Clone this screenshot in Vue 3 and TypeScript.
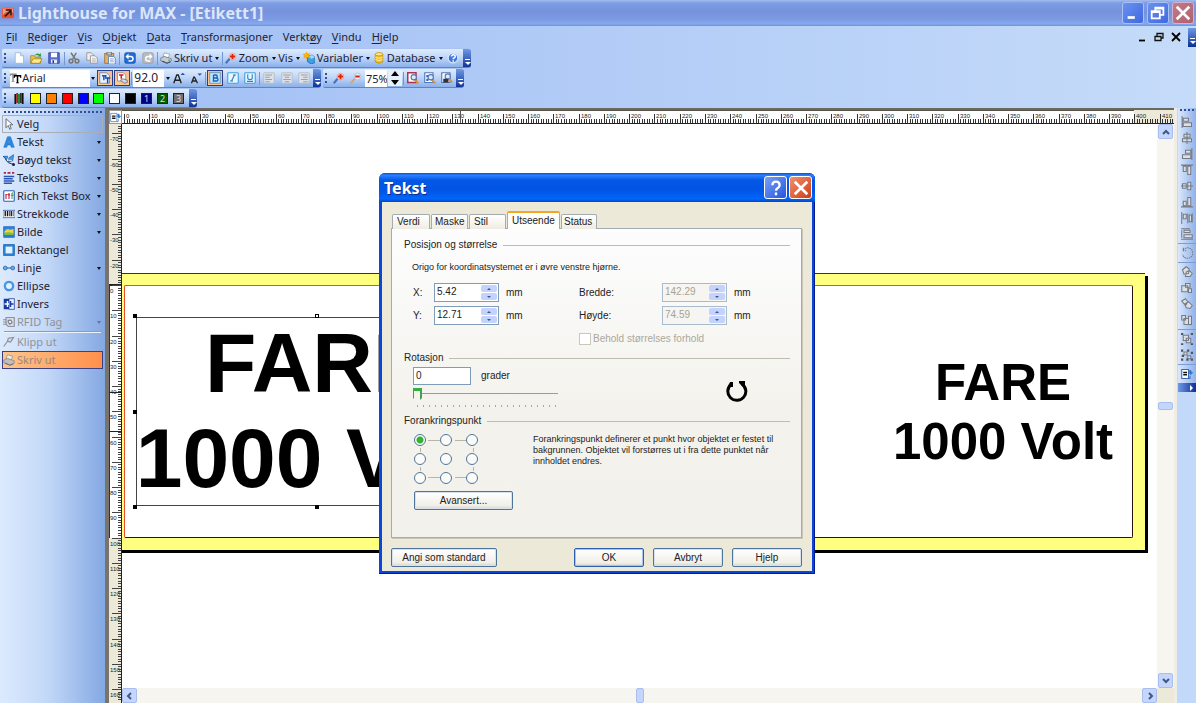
<script setup lang="ts">
import { ref } from 'vue'

const icons: Record<string, string> = {
  logo: '<rect x="0" y="1" width="16" height="14" rx="2" fill="#e2512e"/><path d="M1 2h14v6q-8-5-14 3z" fill="#f39a80"/><path d="M3 12l7-7H5V3h8v8h-2V7l-6 6z" fill="#2b1512"/>',
  page: '<path d="M3 1h7l4 4v10H3z" fill="#fff" stroke="#8fb2dc"/><path d="M10 1v4h4" fill="#cfe2f8" stroke="#8fb2dc"/>',
  open: '<path d="M1 5h5l1 2h7v8H1z" fill="#f5c842" stroke="#9a7a20"/><path d="M1 15l3-6h12l-3 6z" fill="#ffe88a" stroke="#9a7a20"/><path d="M6 5q3-5 7-2l1-2 1 5-5 0 2-1q-3-2-6 0z" fill="#2f9a3c"/>',
  save: '<path d="M1 1h14v14H1z" fill="#5a6fd0" stroke="#28358a"/><rect x="4" y="1" width="8" height="6" fill="#fff"/><rect x="4" y="10" width="8" height="5" fill="#dfe5fa"/><rect x="6" y="11" width="2" height="4" fill="#28358a"/>',
  cut: '<path d="M4 1l6 9M11 1L6 10" stroke="#777" stroke-width="2" fill="none"/><circle cx="4" cy="12" r="2.5" fill="none" stroke="#777" stroke-width="2"/><circle cx="12" cy="12" r="2.5" fill="none" stroke="#777" stroke-width="2"/>',
  copy: '<path d="M1 1h6l3 3v7H1z" fill="#eee" stroke="#888"/><path d="M6 5h6l3 3v7H6z" fill="#f7f7f7" stroke="#888"/><path d="M8 9h5M8 11h5M8 13h5" stroke="#aaa"/>',
  paste: '<rect x="1" y="2" width="12" height="13" fill="#e3b35c" stroke="#94682a"/><rect x="4" y="0" width="6" height="4" fill="#c9c9c9" stroke="#666"/><path d="M6 6h7l2 2v8H6z" fill="#fff" stroke="#4a6fb5"/><path d="M8 9h5M8 11h5M8 13h5" stroke="#7a9bd0"/>',
  undo: '<rect x="1" y="1" width="14" height="14" rx="2" fill="#1f6fd8" stroke="#1048a0"/><path d="M4 6h5q3 0 3 3t-3 3H6" fill="none" stroke="#fff" stroke-width="2"/><path d="M2 6l4-4v8z" fill="#fff"/>',
  redo: '<rect x="1" y="1" width="14" height="14" rx="2" fill="#b9bcc2" stroke="#999"/><path d="M12 6H8q-3 0-3 3t3 3h3" fill="none" stroke="#fff" stroke-width="2"/><path d="M14 6l-4-4v8z" fill="#fff"/>',
  print: '<path d="M4 6l2-5 7 2-2 5z" fill="#fff" stroke="#8a94a8"/><path d="M1 8l5-2 9 3v3l-5 3-9-3z" fill="#c6ccd8" stroke="#6b7488"/><path d="M3 12l6 3 5-2" stroke="#444c60" stroke-width="1.5" fill="none"/><circle cx="12" cy="11" r="1" fill="#35a040"/>',
  printoff: '<path d="M4 6l2-5 7 2-2 5z" fill="#eeeae4" stroke="#8f8f92"/><path d="M1 8l5-2 9 3v3l-5 3-9-3z" fill="#c2bfbb" stroke="#85868a"/><path d="M3 12l6 3 5-2" stroke="#74767c" stroke-width="1.5" fill="none"/>',
  zoom: '<path d="M1 15l6-7" stroke="#4a72c4" stroke-width="3"/><circle cx="10" cy="6" r="4.5" fill="#fbe1d4" stroke="#e8a080"/><path d="M10 2.500v7M6.500 6h7" stroke="#e02010" stroke-width="2.500"/>',
  variable: '<path d="M6 6l6-2 4 3v7l-5 2-5-3z" fill="#3f9fe0" stroke="#1d66a8"/><path d="M6 6l6-2 4 3-5 2z" fill="#a5dbf8"/><path d="M5 0l1 3 3-1-2 3 3 2-4 0-1 3-1-3-3 1 1-3-2-2 3 0z" fill="#ffb400" stroke="#d88a00" stroke-width=".5"/>',
  database: '<path d="M3 3v10q5 4 10 0V3z" fill="#f5c220" stroke="#c08a00"/><ellipse cx="8" cy="3" rx="5" ry="2.200" fill="#ffe88a" stroke="#c08a00"/><path d="M3 7q5 3 10 0M3 10q5 3 10 0" fill="none" stroke="#fff2b0"/>',
  help: '<circle cx="8" cy="8" r="6.500" fill="#3d78dc" stroke="#dbe8fb" stroke-width="1.500"/><path d="M6 6q0-2.500 2.500-2.500T11 6q0 1.500-2.500 2.500v1M8.300 11v2" fill="none" stroke="#fff" stroke-width="2"/>',
  tt: '<path d="M0 2h9v3H8L7 4H5v8h1v1H2v-1h1V4H2L1 5H0z" fill="#888"/><path d="M5 4h10v4h-1l-1-2h-2v8h1v1H8v-1h1V6H7L6 8H5z" fill="#000"/>',
  doctext: '<path d="M1 1h9l4 4v10H1z" fill="#e9f3ff" stroke="#4a7cc0"/><path d="M4 5h5v2M6.500 5v6" stroke="#2255aa" stroke-width="2" fill="none"/><path d="M8 8h7M11.500 8v7" stroke="#1848a8" stroke-width="2"/>',
  docprint: '<path d="M2 1h8l3 3v8H2z" fill="#fff" stroke="#6a7fa8"/><path d="M4 4h6M7 4v5" stroke="#d02020" stroke-width="2"/><path d="M6 11l3-2 6 2v3l-4 1z" fill="#d5d9e2" stroke="#555f78"/>',
  grow: '<path d="M1 15L5 4h2l4 11M3 11h6" stroke="#222" stroke-width="1.800" fill="none"/><path d="M10 4l3-3 3 3z" fill="#1c4fb0"/>',
  shrink: '<path d="M2 15L5 7h1l4 8M4 12h5" stroke="#222" stroke-width="1.700" fill="none"/><path d="M10 2l3 3 3-3z" fill="#1c4fb0"/>',
  bold: '<rect x="1" y="1" width="14" height="14" fill="#bfe4fb" stroke="#3f8fd0"/><path d="M6 4v8M6 4h3q2 0 2 2t-2 2H6h4q2 0 2 2t-2 2H5" fill="none" stroke="#1c62b4" stroke-width="1.800"/>',
  italic: '<rect x="1" y="1" width="14" height="14" rx="1" fill="#eaf6ff" stroke="#3fa0e0" stroke-width="1.500"/><path d="M10 4L6 12M8 4h4M4 12h4" fill="none" stroke="#2f7fc8" stroke-width="1.500"/>',
  under: '<rect x="1" y="1" width="14" height="14" rx="1" fill="#eaf6ff" stroke="#3fa0e0" stroke-width="1.500"/><path d="M5 3v5q0 2 3 2t3-2V3M4 12.500h8" fill="none" stroke="#2f7fc8" stroke-width="1.500"/>',
  alignl: '<rect x="1" y="1" width="14" height="14" rx="1" fill="#dde1e8" stroke="#b2b6be"/><path d="M3 4h9M3 7h6M3 10h9M3 13h6" stroke="#858992"/>',
  alignc: '<rect x="1" y="1" width="14" height="14" rx="1" fill="#dde1e8" stroke="#b2b6be"/><path d="M3 4h10M5 7h6M3 10h10M5 13h6" stroke="#858992"/>',
  alignr: '<rect x="1" y="1" width="14" height="14" rx="1" fill="#dde1e8" stroke="#b2b6be"/><path d="M4 4h9M7 7h6M4 10h9M7 13h6" stroke="#858992"/>',
  zoomout: '<path d="M1 15l6-7" stroke="#e0a060" stroke-width="2.500"/><circle cx="10" cy="6" r="4.500" fill="#e4f0fc" stroke="#a8b8d0"/><path d="M7 6h6" stroke="#e02010" stroke-width="2.500"/>',
  fitpage: '<path d="M1 1h11v13H1z" fill="#fff" stroke="#b03050" stroke-width="2"/><path d="M10 10l5 5" stroke="#e09030" stroke-width="2.500"/><circle cx="9" cy="7" r="3.500" fill="#dcecfb" stroke="#5578b8" stroke-width="1.500"/>',
  fitobj: '<path d="M1 1h11v13H1z" fill="#fff" stroke="#5578b8" stroke-width="1.500"/><path d="M3 4h3v3H3zM3 9h3v3H3z" fill="#3468c8"/><path d="M10 10l5 5" stroke="#e09030" stroke-width="2.500"/><circle cx="9" cy="7" r="3.500" fill="#dcecfb" stroke="#5578b8" stroke-width="1.500"/>',
  fitsel: '<path d="M1 1h11v13H1z" fill="#fff" stroke="#5578b8" stroke-width="1.500"/><circle cx="9" cy="6" r="3.500" fill="#dcecfb" stroke="#5578b8" stroke-width="1.500"/><path d="M11 9l4 5" stroke="#e09030" stroke-width="2.500"/><path d="M3 9h7v5H3z" fill="#333"/>',
  arrow: '<path d="M4 1v12l3-3 2 5 2-1-2-5h4z" fill="#fff" stroke="#444"/>',
  text: '<path d="M1 15L6 1h4l5 14h-4l-1-3H6l-1 3zM7 9h2L8 5z" fill="#2a8be4" stroke="#1765b8" stroke-width=".7" fill-rule="evenodd"/>',
  bent: '<path d="M0 3q3 1 4 5t10 6" fill="none" stroke="#123" stroke-width="1.200"/><path d="M2 3h4v2L4 8zM8 5l6-4-1 8-6 2z" fill="#4aa0e8" stroke="#1c5ca8"/><circle cx="14" cy="14" r="2" fill="#223"/><path d="M6 8l6 1" stroke="#fff"/>',
  textbox: '<path d="M1 1h3M6 1h4M12 1h3" stroke="#b02840" stroke-width="2.500"/><path d="M1 6h14M1 9h12M1 12h14M1 15h11" stroke="#2c55b8" stroke-width="1.800"/>',
  rtf: '<rect x="1" y="1" width="14" height="14" rx="1" fill="#fff" stroke="#2c62b8" stroke-width="1.500"/><path d="M4 12V6h2M8 4v8M6.500 6.500h3" fill="none" stroke="#c02838" stroke-width="1.500"/><path d="M12 12V4h1.500M11 7h3" fill="none" stroke="#208848" stroke-width="1.200"/>',
  barcode: '<rect x="0" y="3" width="16" height="10" fill="#fff" stroke="#2c4f98"/><path d="M3 4v7M6 4v7M11 4v7" stroke="#111" stroke-width="1.800"/><path d="M8.500 4v7M13.500 4v7" stroke="#111"/>',
  image: '<rect x="1" y="1" width="14" height="14" fill="#2a86e0" stroke="#1c5cb0"/><path d="M2 7q3-3 5-3 1 2 7 0v6H2z" fill="#f4d040"/><path d="M2 9q6-2 12 1v2H2z" fill="#78c048"/><path d="M2 12h12v2H2z" fill="#2a78d0"/>',
  rect: '<rect x="2" y="2" width="12" height="12" fill="#e4f2ff" stroke="#2f86d8" stroke-width="3"/><rect x="1" y="1" width="14" height="14" fill="none" stroke="#1560b0"/>',
  line: '<path d="M3 8h10" stroke="#2c70c0" stroke-width="1.500"/><circle cx="3" cy="8" r="2.500" fill="#6ab0f0" stroke="#1c58a8"/><circle cx="13" cy="8" r="2.500" fill="#6ab0f0" stroke="#1c58a8"/>',
  ellipse: '<circle cx="8" cy="8" r="5.500" fill="#e4f2ff" stroke="#2a80d4" stroke-width="3"/><circle cx="8" cy="8" r="5.500" fill="none" stroke="#79bcf2"/>',
  invers: '<rect x="1" y="1" width="7" height="14" fill="#143a9c"/><rect x="8" y="1" width="7" height="14" fill="#e8f0ff" stroke="#143a9c"/><path d="M2 7h3V4h2v3h1v2H7v3H5V9H2z" fill="#fff"/><path d="M14 7h-3V4H9v8h2V9h3z" fill="#143a9c"/>',
  rfid: '<path d="M4 2h11v12H7L4 11z" fill="#d8dce4" stroke="#8d929c" stroke-width="1.500"/><path d="M0 5h5M0 8h5M0 11h5" stroke="#8d929c" stroke-width="1.500"/><path d="M7 6q4-2 5 3l-3 2-2-3z" fill="#f2f4f8" stroke="#777d88" stroke-width="1.500"/>',
  clip: '<path d="M1 14l5-7M6 7l1-4 7-1-4 6z" fill="#d5d9e0" stroke="#8a8f98" stroke-width="1.500"/>',
  aL: '<path d="M1.500 0v16M3 3h7v4H3zM3 9h11v5H3z"/>', aC: '<path d="M8 0v16M4 3h8v4H4zM2 9h12v4H2z"/>', aR: '<path d="M14.500 0v16M6 3h7v4H6zM2 9h11v5H2z"/>',
  aT: '<path d="M0 1.500h16M3 3h4v7H3zM9 3h4v11H9z"/>', aM: '<path d="M0 8h16M2 5h5v6H2zM9 3h4v10H9z"/>', aB: '<path d="M0 14.500h16M3 7h4v6H3zM9 2h4v11H9z"/>',
  dH: '<path d="M1 0v16M15 2v12M3 3h4v6H3zM9 2v13M11 4h3v9h-3z"/>', dV: '<path d="M0 1h12M0 15h16M4 3h8v3H4zM4 9h11v4H4zM1 3v10"/>',
  rot: '<path d="M3 4a7 7 0 1 1-1 6M3 1v4h4" fill="none" stroke-dasharray="2 1"/>',
  o1: '<path d="M2 5l5-4 4 3-1 6-6 1zM7 8l4-2 4 4-3 4-6 0z"/>', o2: '<path d="M1 5h8v8H1zM6 2h6v5H6zM10 9h4v5h-4z"/>', o3: '<path d="M1 4l5-3 3 4-3 5zM5 8l5-3 5 5-3 4-5-1z"/>', o4: '<path d="M1 2h5v6H1zM4 6h6v8H4zM10 3h4v11h-4z"/>',
  grp: '<path d="M3 3h7v7H3zM7 7h6v6H7z"/><path d="M0 1h3M13 1h3M0 15h3M13 15h3" stroke="#555" stroke-width="3"/>', ungrp: '<path d="M4 4h4v4H4zM9 9h4v4H9z"/><path d="M0 2h3M8 2h3M13 5h3M1 9h3M0 14h3M7 14h3M13 14h3" stroke="#555" stroke-width="3"/>',
  props: '<path d="M1 2h9v12H1z" fill="#fff" stroke="#3d68b0"/><path d="M3 6h5M3 9h5" stroke="#111" stroke-width="2"/><path d="M10 4q4-3 4 2l2 0-3 3-3-3h2" fill="#2c70d0" stroke="#2c70d0" stroke-width=".5"/><path d="M12 10v4h-2" fill="none" stroke="#2c70d0"/>',
}

const menus = [['F', 'il', ''], ['R', 'ediger', ''], ['V', 'is', ''], ['O', 'bjekt', ''], ['D', 'ata', ''], ['T', 'ransformasjoner', ''], ['ø', 'y', 'Verkt'], ['V', 'indu', ''], ['H', 'jelp', '']]
const swatches = ['#ffff00', '#ff8000', '#ff0000', '#0000ff', '#00ff00', '#ffffff', '#000000']
const numbered = [{ n: 1, c: '#000080' }, { n: 2, c: '#006000' }, { n: 3, c: '#707070' }]
const tools = [
  { i: 'arrow', t: 'Velg', m: false, off: false },
  { i: 'text', t: 'Tekst', m: true, off: false },
  { i: 'bent', t: 'Bøyd tekst', m: true, off: false },
  { i: 'textbox', t: 'Tekstboks', m: true, off: false },
  { i: 'rtf', t: 'Rich Tekst Box', m: true, off: false },
  { i: 'barcode', t: 'Strekkode', m: true, off: false },
  { i: 'image', t: 'Bilde', m: true, off: false },
  { i: 'rect', t: 'Rektangel', m: false, off: false },
  { i: 'line', t: 'Linje', m: true, off: false },
  { i: 'ellipse', t: 'Ellipse', m: false, off: false },
  { i: 'invers', t: 'Invers', m: false, off: false },
  { i: 'rfid', t: 'RFID Tag', m: true, off: true },
]
const sideGroups = [['aL', 'aC', 'aR', 'aT', 'aM', 'aB', 'dH', 'dV'], ['rot'], ['o1', 'o2', 'o3', 'o4'], ['grp', 'ungrp'], ['props']]

const step = 2.526
const hTicks = Array.from({ length: 416 }, (_, n) => ({ x: Math.round(2 + n * step), major: n % 10 === 0, n }))
const vTicks = Array.from({ length: 228 }, (_, k) => k - 63).map((n) => ({ y: Math.round(161 + n * step), major: n % 10 === 0, n: n < 0 ? n - 10 : n }))

const posX = ref('5.42')
const posY = ref('12.71')
const width = ref('142.29')
const height = ref('74.59')
const angle = ref('0')
const slide = ref(0)
const anchor = ref(0)
const keep = ref(false)
const font = ref('Arial')
const size = ref('92.0')
const zoomLevel = ref('75%')
const tabs = ['Verdi', 'Maske', 'Stil', 'Utseende', 'Status']
const tab = ref('Utseende')
</script>

<template>
  <div class="app">
    <header class="titlebar">
      <svg class="ic" viewBox="0 0 16 16" v-html="icons.logo" />
      <h1>Lighthouse for MAX - [Etikett1]</h1>
      <div class="winbtns">
        <button aria-label="Minimer"><svg viewBox="0 0 20 20"><path d="M4 15h8" stroke="#fff" stroke-width="3" /></svg></button>
        <button aria-label="Gjenopprett"><svg viewBox="0 0 20 20"><path d="M7 8V4h9v8h-4M7 5h9M3 8h9v8H3zM3 9h9" fill="none" stroke="#fff" stroke-width="2" /></svg></button>
        <button class="close" aria-label="Lukk"><svg viewBox="0 0 20 20"><path d="M3 3l14 14M17 3L3 17" stroke="#fff" stroke-width="3" /></svg></button>
      </div>
    </header>

    <div class="chrome">
      <nav class="menubar">
        <button v-for="m in menus" :key="m[1]">{{ m[2] }}<u>{{ m[0] }}</u>{{ m[1] }}</button>
        <div class="mdi">
          <button aria-label="Minimer dokument"><svg viewBox="0 0 10 10"><path d="M2 8.500h6" stroke="#000" stroke-width="1.800" /></svg></button>
          <button aria-label="Gjenopprett dokument"><svg viewBox="0 0 10 10"><path d="M3 4V1.500h6V6H7M1 4.500h6v4H1z" fill="none" stroke="#111" stroke-width="1.300" /></svg></button>
          <button aria-label="Lukk dokument"><svg viewBox="0 0 10 10"><path d="M1 1l8 8M9 1L1 9" stroke="#000" stroke-width="1.800" /></svg></button>
          <span class="knob" />
        </div>
      </nav>

      <div class="barrow">
        <div class="bar bar-main">
          <span class="grip" />
          <button class="ib" v-for="i in ['page', 'open', 'save']" :key="i" :aria-label="i"><svg class="ic" viewBox="0 0 16 16" v-html="icons[i]" /></button>
          <span class="sep" />
          <button class="ib" v-for="i in ['cut', 'copy', 'paste']" :key="i" :aria-label="i"><svg class="ic" viewBox="0 0 16 16" v-html="icons[i]" /></button>
          <span class="sep" />
          <button class="ib" v-for="i in ['undo', 'redo']" :key="i" :aria-label="i"><svg class="ic" viewBox="0 0 16 16" v-html="icons[i]" /></button>
          <span class="sep" />
          <button class="lb"><svg class="ic" viewBox="0 0 16 16" v-html="icons.print" />Skriv ut<i class="dd" /></button>
          <span class="sep" />
          <button class="lb"><svg class="ic" viewBox="0 0 16 16" v-html="icons.zoom" />Zoom<i class="dd" /></button>
          <button class="lb">Vis<i class="dd" /></button>
          <button class="lb"><svg class="ic" viewBox="0 0 16 16" v-html="icons.variable" />Variabler<i class="dd" /></button>
          <button class="lb"><svg class="ic" viewBox="0 0 16 16" v-html="icons.database" />Database<i class="dd" /></button>
          <button class="ib" aria-label="Hjelp"><svg class="ic" viewBox="0 0 16 16" v-html="icons.help" /></button>
          <span class="knob" />
        </div>
      </div>

      <div class="barrow">
        <div class="bar bar-format">
          <span class="grip" />
          <span class="combo wide">
            <svg class="ic" viewBox="0 0 16 16" v-html="icons.tt" />
            <select v-model="font" aria-label="Skrift"><option>Arial</option></select>
          </span>
          <i class="dd" />
          <button class="ib on" aria-label="Skrivertekst"><svg class="ic" viewBox="0 0 16 16" v-html="icons.doctext" /></button>
          <button class="ib on" aria-label="Skriverfont"><svg class="ic" viewBox="0 0 16 16" v-html="icons.docprint" /></button>
          <span class="sep" />
          <span class="combo"><select v-model="size" aria-label="Størrelse"><option>92.0</option></select></span>
          <i class="dd" />
          <button class="ib" aria-label="Større"><svg class="ic" viewBox="0 0 16 16" v-html="icons.grow" /></button>
          <button class="ib" aria-label="Mindre"><svg class="ic" viewBox="0 0 16 16" v-html="icons.shrink" /></button>
          <span class="sep" />
          <button class="ib on" aria-label="Fet"><svg class="ic" viewBox="0 0 16 16" v-html="icons.bold" /></button>
          <button class="ib" v-for="i in ['italic', 'under']" :key="i" :aria-label="i"><svg class="ic" viewBox="0 0 16 16" v-html="icons[i]" /></button>
          <span class="sep" />
          <button class="ib" v-for="i in ['alignl', 'alignc', 'alignr']" :key="i" :aria-label="i"><svg class="ic" viewBox="0 0 16 16" v-html="icons[i]" /></button>
          <span class="knob" />
        </div>
        <div class="bar bar-zoom">
          <span class="grip" />
          <button class="ib" aria-label="Zoom inn"><svg class="ic" viewBox="0 0 16 16" v-html="icons.zoom" /></button>
          <button class="ib" aria-label="Zoom ut"><svg class="ic" viewBox="0 0 16 16" v-html="icons.zoomout" /></button>
          <input v-model="zoomLevel" class="zoomin" aria-label="Zoomnivå" />
          <span class="updown">
            <button aria-label="Opp"><svg viewBox="0 0 8 5"><path d="M0 5l4-5 4 5z" /></svg></button>
            <button aria-label="Ned"><svg viewBox="0 0 8 5"><path d="M0 0l4 5 4-5z" /></svg></button>
          </span>
          <span class="sep" />
          <button class="ib" v-for="i in ['fitpage', 'fitobj', 'fitsel']" :key="i" :aria-label="i"><svg class="ic" viewBox="0 0 16 16" v-html="icons[i]" /></button>
          <span class="knob" />
        </div>
      </div>

      <div class="barrow">
        <div class="bar bar-color">
          <span class="grip" />
          <button class="sw multi" aria-label="Alle farger"><svg viewBox="0 0 10 12"><path d="M1 1v11M9 0v12" stroke="#111" stroke-width="2" /><path d="M3 0v11" stroke="#c01818" stroke-width="2" /><path d="M5 1v11" stroke="#188a18" stroke-width="2" /><path d="M7 0v11" stroke="#333" stroke-width="2" /></svg></button>
          <button v-for="c in swatches" :key="c" class="sw" :style="{ background: c }" :aria-label="c" />
          <button v-for="s in numbered" :key="s.n" class="sw num" :style="{ background: s.c }">{{ s.n }}</button>
          <span class="knob" />
        </div>
      </div>
    </div>

    <main class="work">
      <aside class="palette">
        <div class="dots" />
        <button v-for="(t, k) in tools" :key="t.t" :class="['tool', { first: k === 0 }]" :disabled="t.off">
          <svg class="ic" viewBox="0 0 16 16" v-html="icons[t.i]" /><span>{{ t.t }}</span><i v-if="t.m" class="dd" />
        </button>
        <hr />
        <button class="tool" disabled><svg class="ic" viewBox="0 0 16 16" v-html="icons.clip" /><span>Klipp ut</span></button>
        <button class="tool picked" disabled><svg class="ic" viewBox="0 0 16 16" v-html="icons.printoff" /><span>Skriv ut</span></button>
      </aside>

      <section class="doc">
        <button class="corner" aria-label="Etikettoppsett"><svg class="ic" viewBox="0 0 16 16" v-html="icons.props" /></button>
        <svg class="ruler-h" shape-rendering="crispEdges">
          <rect x="0" y="0" width="1012" height="13" fill="#fff" />
          <rect x="0" y="0" width="1012" height="1" fill="#55534a" />
          <template v-for="t in hTicks" :key="t.n">
            <rect :x="t.x" :y="t.major ? 4 : 9" width="1" :height="t.major ? 9 : 4" fill="#333" />
            <text v-if="t.major" :x="t.x + 2" y="8">{{ t.n }}</text>
          </template>
          <rect x="338" y="1" width="1" height="12" fill="#555" />
          <rect x="0" y="13" width="100%" height="1" fill="#222" />
        </svg>
        <svg class="ruler-v" shape-rendering="crispEdges">
          <rect x="0" y="161" width="12" height="253" fill="#fff" />
          <rect x="0" y="160" width="12" height="2" fill="#222" />
          <rect x="0" y="161" width="1" height="253" fill="#333" />
          <template v-for="t in vTicks" :key="t.n">
            <rect :x="t.major ? 3 : 9" :y="t.y" :width="t.major ? 9 : 3" height="1" fill="#444" />
            <text v-if="t.major" x="1" :y="t.y + 8">{{ t.n }}</text>
          </template>
          <rect x="0" y="268" width="12" height="1" fill="#222" />
          <rect x="0" y="307" width="12" height="1" fill="#222" />
          <rect x="12" y="0" width="1" height="100%" fill="#222" />
        </svg>
        <div class="canvas">
          <div class="label-sheet"><div class="label-face" /></div>
          <div class="obj big">FARE<br />1000 Volt</div>
          <div class="obj small">FARE<br />1000 Volt</div>
          <div class="selection">
            <b class="h tl" /><b class="h tc" /><b class="h ml" /><b class="h bl" /><b class="h bc" />
          </div>
        </div>
        <div class="vscroll">
          <button aria-label="Rull opp"><svg viewBox="0 0 8 8"><path d="M1 6l3-3 3 3" /></svg></button>
          <span class="thumb" />
          <button aria-label="Rull ned"><svg viewBox="0 0 8 8"><path d="M1 2l3 3 3-3" /></svg></button>
        </div>
        <div class="hscroll">
          <button aria-label="Rull til venstre"><svg viewBox="0 0 8 8"><path d="M5 1L2 4l3 3" /></svg></button>
          <span class="thumb" />
          <button aria-label="Rull til høyre"><svg viewBox="0 0 8 8"><path d="M3 1l3 3-3 3" /></svg></button>
        </div>
      </section>

      <aside class="side">
        <div class="sidebar">
          <div class="dots" />
          <div v-for="(g, k) in sideGroups" :key="k" class="sgroup">
            <button v-for="i in g" :key="i" :aria-label="i"><svg viewBox="0 0 16 16" v-html="icons[i]" /></button>
          </div>
          <span class="sideknob" />
        </div>
      </aside>
    </main>

    <section class="dialog" role="dialog" aria-labelledby="dlg-title">
      <div class="dlg-head">
        <h2 id="dlg-title">Tekst</h2>
        <button aria-label="Hjelp"><svg viewBox="0 0 20 20"><path d="M6 7q0-4 4-4t4 4q0 2-2 3t-2 3M10 15v3" fill="none" stroke="#fff" stroke-width="2.600" /></svg></button>
        <button class="close" aria-label="Lukk"><svg viewBox="0 0 20 20"><path d="M3 3l14 14M17 3L3 17" stroke="#fff" stroke-width="3" /></svg></button>
      </div>
      <div class="dlg-body">
        <div class="tabs" role="tablist">
          <button v-for="t in tabs" :key="t" role="tab" :aria-selected="t === tab" :class="['tab', 'tab-' + t.toLowerCase(), { active: t === tab }]" @click="tab = t">{{ t }}</button>
        </div>
        <div class="panel" role="tabpanel">
          <h3>Posisjon og størrelse</h3>
          <p class="origin">Origo for koordinatsystemet er i øvre venstre hjørne.</p>
          <div class="fields">
            <label for="px">X:</label>
            <span class="spin"><input id="px" v-model="posX" /><span class="arrows"><button aria-label="X opp"><i class="up" /></button><button aria-label="X ned"><i class="dn" /></button></span></span>
            <span>mm</span>
            <label for="pw">Bredde:</label>
            <span class="spin off"><input id="pw" v-model="width" disabled /><span class="arrows"><button aria-label="Bredde opp"><i class="up" /></button><button aria-label="Bredde ned"><i class="dn" /></button></span></span>
            <span>mm</span>
            <label for="py">Y:</label>
            <span class="spin"><input id="py" v-model="posY" /><span class="arrows"><button aria-label="Y opp"><i class="up" /></button><button aria-label="Y ned"><i class="dn" /></button></span></span>
            <span>mm</span>
            <label for="ph">Høyde:</label>
            <span class="spin off"><input id="ph" v-model="height" disabled /><span class="arrows"><button aria-label="Høyde opp"><i class="up" /></button><button aria-label="Høyde ned"><i class="dn" /></button></span></span>
            <span>mm</span>
          </div>
          <label class="keep"><input v-model="keep" type="checkbox" disabled />Behold størrelses forhold</label>
          <h3>Rotasjon</h3>
          <div class="rotation">
            <div>
              <div class="deg"><input id="deg" v-model="angle" /><label for="deg">grader</label></div>
              <input v-model="slide" class="slider" type="range" min="0" max="360" aria-label="Rotasjon" />
              <div class="marks" />
            </div>
            <svg class="turn" viewBox="0 0 22 22"><path d="M5 4.500a9 9 0 1 0 11 -.5" fill="none" stroke="#000" stroke-width="3" /><path d="M13 1h6v6h-2l-4-4z" /><path d="M4 2l3 0v5H2z" /></svg>
          </div>
          <h3>Forankringspunkt</h3>
          <div class="anchor">
            <div class="radios" role="radiogroup" aria-label="Forankringspunkt">
              <svg class="links" viewBox="0 0 60 50"><path d="M14 6.500h13M41 6.500h12M14 43.500h13M41 43.500h12M6.500 14v4M6.500 33v4M59.500 14v4M59.500 33v4" stroke="#b8b5a5" fill="none" /></svg>
              <input v-for="n in 9" :key="n" v-model="anchor" type="radio" name="anchor" :value="n - 1" :aria-label="'Punkt ' + n" />
            </div>
            <p>Forankringspunkt definerer et punkt hvor objektet er festet til bakgrunnen. Objektet vil forstørres ut i fra dette punktet når innholdet endres.</p>
          </div>
          <button class="xp adv">Avansert...</button>
        </div>
        <div class="actions">
          <button class="xp std">Angi som standard</button>
          <button class="xp def">OK</button>
          <button class="xp">Avbryt</button>
          <button class="xp">Hjelp</button>
        </div>
      </div>
    </section>
  </div>
</template>

<style>
html, body { height: 100%; overflow: hidden; }
</style>

<style scoped>
.app {
  position: relative;
  display: flex;
  flex-direction: column;
  height: 100vh;
  overflow: hidden;
  font: 11px/14px "Noto Sans", "DejaVu Sans", sans-serif;
  color: #1c2233;
  background: linear-gradient(90deg, #9fbdf5, #c5dbf9);
}
.app *, .app *::before, .app *::after { box-sizing: border-box; }
button, input, select { font: inherit; color: inherit; margin: 0; padding: 0; border: 0; background: none; border-radius: 0; outline: 0; }
h1, h2, h3, p { margin: 0; }
.ic { width: 12px; height: 12px; flex: none; display: block; }

.titlebar {
  display: flex;
  align-items: center;
  height: 26px;
  padding: 0 2px;
  gap: 4px;
  background: linear-gradient(#a4bdf0 0, #7d9ce4 12%, #7792dc 45%, #7c9be4 75%, #86a9ee 92%, #6f8fd8 100%);
}
.titlebar h1 { flex: 1; font-size: 16px; line-height: 24px; font-weight: 700; color: #dbe6fb; }
.winbtns { display: flex; gap: 3px; }
.winbtns button, .dlg-head button {
  width: 22px;
  height: 22px;
  padding: 1px;
  border: 1px solid #a9c0f4;
  border-radius: 3px;
  background: linear-gradient(135deg, #6a92f0, #3f68e0);
}
.winbtns .close { background: linear-gradient(135deg, #c47a88, #b06070); border-color: #cdb4d0; }
.winbtns svg, .dlg-head svg { display: block; width: 18px; height: 18px; }

.chrome { height: 82px; }
.menubar { display: flex; align-items: center; height: 22px; padding-left: 6px; gap: 10px; }
.menubar button { line-height: 16px; }
.menubar u { text-underline-offset: 2px; }
.mdi { display: flex; align-items: center; margin-left: auto; gap: 7px; height: 20px; }
.mdi button { width: 10px; height: 10px; }
.mdi svg { display: block; width: 10px; height: 10px; }

.barrow { display: flex; gap: 2px; height: 20px; padding: 0 2px; }
.bar {
  display: flex;
  align-items: center;
  height: 20px;
  border-radius: 2px 3px 3px 2px;
  border-bottom: 1px solid #5f84c6;
  border-top: 1px solid #a9c4f4;
  background: linear-gradient(#dfebfd, #bdd4f8 50%, #8cb0ea);
  overflow: hidden;
}
.grip { width: 7px; height: 12px; flex: none; background: radial-gradient(circle at 3px 2px, #34508f 1px, transparent 1px) 0 0 / 7px 4px; }
.sep { width: 1px; height: 13px; flex: none; background: #7596cf; }
.ib { display: flex; align-items: center; justify-content: center; width: 16px; height: 16px; flex: none; }
.ib.on { border: 1px solid #2b3f86; background: linear-gradient(#ffb98a, #fdca92); }
.lb { display: flex; align-items: center; gap: 2px; height: 16px; flex: none; white-space: nowrap; }
.dd { display: block; flex: none; width: 0; height: 0; border: 2px solid transparent; border-top: 3px solid #111; border-bottom: 0; }
.lb .dd { margin: 0 1px; }
.knob {
  width: 8px;
  height: 19px;
  flex: none;
  background: linear-gradient(#6f99e4, #0c2f94);
  position: relative;
}
.knob::after { content: ""; position: absolute; left: 2px; bottom: 3px; border: 3px solid transparent; border-top-color: #fff; border-bottom: 0; }
.knob::before { content: ""; position: absolute; left: 2px; bottom: 8px; width: 5px; height: 1px; background: #fff; }
.bar-main { width: 469px; justify-content: space-between; }
.bar-format { width: 319px; justify-content: space-between; }
.bar-zoom { width: 141px; justify-content: space-between; }
.bar-color { width: 195px; justify-content: space-between; }
.combo { display: flex; align-items: center; height: 17px; width: 31px; background: #fff; }
.combo select { appearance: none; width: 100%; font-size: 12px; line-height: 16px; color: #223; padding-left: 1px; }
.combo.wide { width: 80px; }
.combo.wide select { padding: 0; font-size: 11px; }
.zoomin { width: 22px; height: 17px; background: #fff; padding-left: 1px; color: #223; }
.updown { display: flex; flex-direction: column; justify-content: space-between; width: 14px; height: 16px; background: #e6effc; padding: 1px 3px; }
.updown button { height: 5px; display: block; }
.updown svg { width: 8px; height: 5px; display: block; }
.sw { width: 11px; height: 11px; border: 1px solid #222; flex: none; }
.sw.multi { border: 0; }
.sw.multi svg { display: block; width: 10px; height: 11px; }
.sw.num { font-size: 9px; line-height: 9px; color: #e3d6f0; text-align: center; }

.work { display: flex; flex: 1; min-height: 0; }
.palette { width: 105px; flex: none; padding: 2px 2px 0; background: linear-gradient(90deg, #dceafd, #c3d8f8 45%, #84a8e2); }
.dots { height: 5px; margin: 0 1px; background: radial-gradient(circle at 2px 2px, #2e4f96 1px, transparent 1px) 0 0 / 4px 5px; }
.tool { display: flex; align-items: center; gap: 2px; width: 100%; height: 18px; padding: 0 1px 0 0; text-align: left; border: 1px solid transparent; }
.tool span { flex: 1; white-space: nowrap; line-height: 16px; }
.tool.first { border-color: #a8adb8; }
.tool:disabled { color: #8e9299; }
.tool:disabled .dd { opacity: .35; }
.palette hr { margin: 0 2px; border: 0; height: 2px; border-top: 1px solid #7c9cd4; border-bottom: 1px solid #eef4ff; }
.tool.picked { border-color: #3c3f80; background: linear-gradient(90deg, #ffc58a, #ff8f4c); color: #97887f; }

.doc {
  flex: 1;
  min-width: 0;
  display: grid;
  grid-template: 14px minmax(0, 1fr) 15px / 13px minmax(0, 1fr) 17px;
  border-top: 2px solid #6b695d;
  border-left: 4px solid #77756b;
  background: #ece9d8;
}
.corner { border: 1px solid #999; background: #fff; overflow: hidden; }
.corner .ic { width: 11px; height: 11px; }
.ruler-h { grid-column: 2 / 4; width: 100%; height: 14px; display: block; background: #ece9d8; }
.ruler-v { grid-row: 2 / 4; width: 13px; height: 100%; display: block; overflow: hidden; background: #ece9d8; }
.doc text { font: 6px "Liberation Sans", Arial, sans-serif; fill: #222; }
.canvas { position: relative; overflow: hidden; background: #fff; }
.label-sheet {
  position: absolute;
  left: 0;
  top: 149px;
  width: 1023px;
  height: 277px;
  padding: 11px 12px 0 2px;
  background: #ffff80;
  border-top: 1px solid #333;
  box-shadow: 3px 3px 0 #000, 0 3px 0 #000;
}
.label-face { height: 253px; background: #fff; border: 1px solid #e8502c; border-right-color: #301010; border-bottom-color: #301010; border-radius: 2px; }
.obj { position: absolute; color: #000; font-family: "Liberation Sans", Arial, sans-serif; font-weight: 700; text-align: center; white-space: nowrap; }
.big { left: 10px; top: 192px; width: 370px; font-size: 84px; line-height: 95px; }
.small { left: 766px; top: 229px; width: 230px; font-size: 51px; line-height: 59px; }
.selection { position: absolute; left: 14px; top: 193px; width: 362px; height: 189px; border: 1px solid #444; }
.h { position: absolute; width: 4px; height: 4px; background: #000; }
.tl { left: -4px; top: -4px; }
.tc { left: 178px; top: -4px; background: #fff; border: 1px solid #000; }
.ml { left: -4px; top: 92px; }
.bl { left: -4px; bottom: -4px; }
.bc { left: 178px; bottom: -4px; }
.vscroll, .hscroll { display: flex; justify-content: space-between; align-items: center; background: #f6f5f0; }
.vscroll { flex-direction: column; }
.vscroll button, .hscroll button, .vscroll .thumb, .hscroll .thumb { background: #c5d5fb; border: 1px solid #a9bef0; border-radius: 2px; }
.vscroll button, .hscroll button { width: 15px; height: 15px; display: grid; place-items: center; }
.vscroll svg, .hscroll svg { width: 8px; height: 8px; fill: none; stroke: #3f5788; stroke-width: 2; }
.vscroll .thumb { width: 15px; height: 8px; }
.hscroll .thumb { width: 8px; height: 15px; }

.side { width: 22px; flex: none; border-left: 3px solid #f0eee4; background: #c3d9f9; }
.sidebar { display: flex; flex-direction: column; margin-left: 1px; background: linear-gradient(90deg, #dbe8fc, #8fb1ea); }
.sgroup { padding: 1px 0; border-bottom: 1px solid #7c9cd4; }
.sgroup:nth-last-child(2) { border-bottom: 0; }
.sgroup button { display: flex; align-items: center; justify-content: center; width: 18px; height: 16px; }
.sgroup svg { width: 12px; height: 12px; fill: #dcdfe4; stroke: #757a85; stroke-width: 1.400; }
.sideknob { height: 9px; background: linear-gradient(90deg, #6f99e4, #0c2f94); position: relative; }
.sideknob::after { content: ""; position: absolute; right: 3px; top: 2px; border: 3px solid transparent; border-left-color: #fff; border-right: 0; }

.dialog {
  position: absolute;
  left: 379px;
  top: 173px;
  width: 436px;
  padding: 0 3px 3px;
  border-radius: 6px 6px 0 0;
  background: #0a46d8;
  box-shadow: inset -1px -1px 0 #001a90;
  color: #222;
  font: 10px/14px "Liberation Sans", Arial, sans-serif;
}
.dlg-head { display: flex; align-items: center; gap: 2px; height: 29px; margin: 0 -3px; padding: 0 3px 0 5px; border-radius: 6px 6px 0 0; background: linear-gradient(#0a50d0 0, #2a80ff 8%, #0557e6 25%, #0055e5 60%, #0066fa 88%, #0048cc 100%); }
.dlg-head h2 { flex: 1; color: #fff; font: 700 16px/24px "Noto Sans", sans-serif; text-shadow: 1px 1px 0 #0f2c88; }
.dlg-head button { width: 23px; height: 23px; border-color: #fff; background: linear-gradient(135deg, #7ba0f8, #2255dc); padding: 2px; }
.dlg-head .close { background: linear-gradient(135deg, #f09070, #d03c14); }
.dlg-body { padding: 9px 10px 4px 9px; background: #ece9d8; }
.tabs { display: flex; align-items: flex-end; height: 18px; padding-left: 1px; gap: 1px; margin-bottom: -1px; position: relative; }
.tab { height: 15px; padding: 0 4px; text-align: left; border: 1px solid #a3acb0; border-bottom: 0; border-radius: 2px 2px 0 0; background: linear-gradient(#fff, #efede2); }
.tab-verdi { width: 38px; }
.tab-maske { width: 37px; padding: 0 3px; }
.tab-stil { width: 37px; }
.tab-utseende { width: 53px; }
.tab-status { width: 36px; padding: 0 2px; }
.tab.active { height: 18px; background: #fdfdfb; border-top: 2px solid #f5a623; }
.panel { height: 310px; padding: 9px 11px 0 12px; border: 1px solid #a3acb0; background: linear-gradient(#fdfdfe, #f3f2ec 60%, #f2f1ec); box-shadow: 1px 1px 0 #c9c7ba; }
.panel h3 { display: flex; align-items: center; gap: 6px; font-size: 10px; font-weight: 400; line-height: 14px; }
.panel h3::after { content: ""; flex: 1; height: 1px; background: #bfbcae; }
.origin { margin: 8px 0 0 8px; font-size: 9px; }
.fields { display: grid; grid-template-columns: 21px 72px 73px 83px 72px auto; row-gap: 4px; align-items: center; margin: 9px 0 0 9px; }
.spin { display: flex; width: 65px; height: 19px; padding: 1px; border: 1px solid #7f9db9; background: #fff; }
.spin input { flex: 1; width: 0; padding: 0 0 1px 1px; }
.spin.off { background: #f6f5f1; color: #a5a391; border-color: #a9bccd; }
.arrows { display: flex; flex-direction: column; gap: 1px; width: 16px; }
.arrows button { flex: 1; display: grid; place-items: center; background: #c3d3fd; border-radius: 2px; }
.arrows i { border: 2px solid transparent; width: 0; height: 0; }
.arrows .up { border-bottom-color: #3f5788; border-top: 0; }
.arrows .dn { border-top-color: #3f5788; border-bottom: 0; }
.keep { display: flex; align-items: center; gap: 2px; height: 14px; margin: 7px 0 5px 175px; color: #aca899; }
.keep input { appearance: none; width: 12px; height: 12px; border: 1px solid #cac8bb; background: #fff; }
.rotation { display: flex; justify-content: space-between; margin: 2px 42px 5px 9px; height: 42px; }
.deg { display: flex; align-items: center; gap: 10px; }
.deg input { width: 58px; height: 18px; border: 1px solid #7f9db9; background: #fff; padding: 0 2px 2px; }
.slider { display: block; appearance: none; width: 145px; height: 20px; background: linear-gradient(#9d9c94, #9d9c94) 0 8px / 100% 1px no-repeat; }
.slider::-webkit-slider-thumb { appearance: none; width: 9px; height: 15px; background: linear-gradient(#35b03f 0 3px, transparent 3px), linear-gradient(90deg, #4a9a58 0 1px, #f3f3ef 1px 7px, #4a9a58 7px); clip-path: polygon(0 0, 100% 0, 100% 70%, 50% 100%, 0 70%); }
.marks { width: 140px; height: 2px; margin-left: 4px; background: repeating-linear-gradient(90deg, #aaa89c 0 1px, transparent 1px 6px); }
.turn { width: 22px; height: 22px; margin-top: 13px; }
.anchor { display: flex; margin: 6px 0 0 10px; }
.radios { position: relative; display: grid; grid-template-columns: repeat(3, 12px); gap: 7px 14px; width: 119px; }
.links { position: absolute; left: 0; top: 0; width: 60px; height: 50px; }
.radios input { appearance: none; position: relative; width: 12px; height: 12px; border: 1px solid #4f7699; border-radius: 50%; background: #fbfbf9; }
.radios input:checked { background: radial-gradient(circle, #2fb52f 0 3px, #fbfbf9 4px); }
.anchor p { flex: 1; font-size: 9px; line-height: 11px; padding-right: 6px; }
.xp { height: 19px; width: 70px; border: 1px solid #4f749c; border-radius: 2px; background: linear-gradient(#fff, #f0efe8 80%, #d8d4c8); font-size: 10px; text-align: center; box-shadow: inset 0 0 0 1px #d8e2ee; }
.adv { display: block; width: 99px; margin: 7px 0 0 10px; }
.actions { display: flex; gap: 9px; margin-top: 10px; }
.std { width: 106px; margin-right: auto; }
.def { border-color: #2f5fb0; box-shadow: inset 0 0 0 1px #a8c2f0; }
</style>
